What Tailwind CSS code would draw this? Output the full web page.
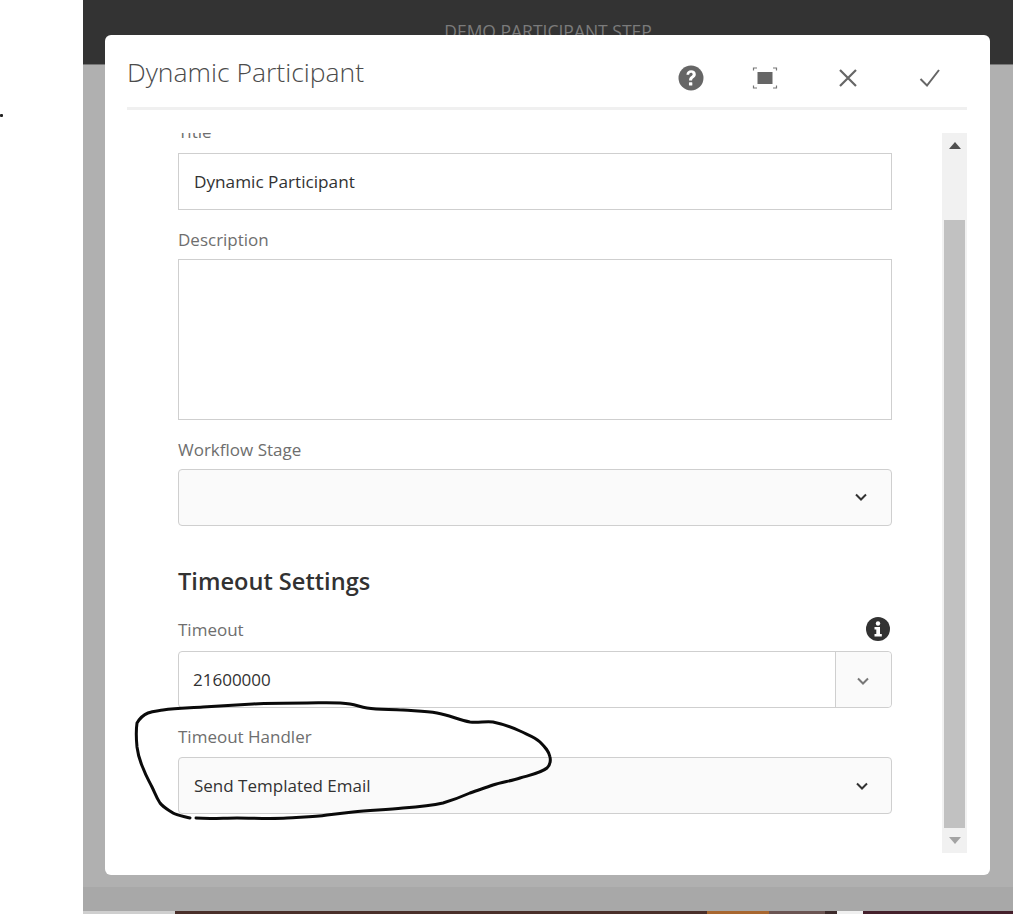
<!DOCTYPE html>
<html lang="en">
<head>
<meta charset="utf-8">
<title>Dynamic Participant</title>
<script src="https://cdn.jsdelivr.net/npm/@tailwindcss/browser@4"></script>
</head>
<body class="bg-white font-['Open_Sans',sans-serif]">
<div class="relative flex h-[914px] w-[1013px] overflow-hidden bg-white">
  <div class="absolute left-0 top-[114px] h-[3px] w-[3px] rounded-[1px] bg-[#222]"></div>
  <div class="w-[83px] shrink-0"></div>
  <div class="flex flex-1 flex-col">
    <div class="flex h-[65px] shrink-0 justify-center border-b border-[#777] bg-[#333] pt-[21px] text-[17.5px] leading-[20px] text-[#7b7b7b]">DEMO PARTICIPANT STEP</div>
    <div class="flex-1 bg-[#b0b0b0]"></div>
    <div class="h-[24px] shrink-0 bg-[#a8a8a8]"></div>
    <div class="flex h-[3px] shrink-0">
      <div class="w-[92px] bg-[#cfcfcf]"></div>
      <div class="w-[532px] bg-[#4a2f2a]"></div>
      <div class="w-[62px] bg-[#a8672f]"></div>
      <div class="w-[56px] bg-[#6b5553]"></div>
      <div class="w-[12px] bg-[#3d2b2b]"></div>
      <div class="w-[26px] bg-[#f0f0f0]"></div>
      <div class="flex-1 bg-[#45202c]"></div>
    </div>
  </div>

  <div class="absolute left-[105px] top-[35px] flex h-[840px] w-[885px] flex-col rounded-[6px] bg-white">
    <div class="ml-[22px] mr-[23px] flex h-[75px] shrink-0 items-center border-b-[3px] border-[#f0f0f0] pt-[14px]">
      <div class="mb-[12px] flex-1 text-[26.5px] font-light leading-[36px] text-[#4b4b4b]">Dynamic Participant</div>
      <div class="flex items-center">
        <svg class="mr-[48px]" width="26" height="26" viewBox="0 0 26 26"><circle cx="13" cy="13" r="12.500" fill="#666"/><g transform="translate(13 13) scale(1.2) translate(-13 -13)"><path d="M9.200 10.200c.1-2.300 1.700-3.600 3.900-3.600 2.300 0 3.900 1.300 3.900 3.300 0 1.500-.8 2.300-1.800 3-1 .7-1.300 1.100-1.300 2.100h-2.500c0-1.700.5-2.500 1.700-3.400.8-.6 1.300-1 1.300-1.700 0-.8-.6-1.300-1.400-1.300-.9 0-1.400.6-1.500 1.600z" fill="#fff"/><rect x="11.300" y="16.500" width="2.800" height="2.800" rx=".5" fill="#fff"/></g></svg>
        <svg class="mr-[60px]" width="26" height="22" viewBox="0 0 26 22" fill="none"><rect x="5.500" y="5" width="15" height="12" fill="#666"/><path d="M5 1H1.500V3.500M21 1H24.500V3.500M5 21H1.500V18.500M21 21H24.500V18.500" stroke="#777" stroke-width="1.200"/></svg>
        <svg class="mr-[61px]" width="20" height="20" viewBox="0 0 20 20" fill="none"><path d="M2 2L18 18M18 2L2 18" stroke="#666" stroke-width="2.200"/></svg>
        <svg class="mr-[26px]" width="22" height="20" viewBox="0 0 22 20" fill="none"><path d="M1.500 11L8 17.500L20 2" stroke="#666" stroke-width="2"/></svg>
      </div>
    </div>

    <div class="mx-[22px] mt-[23px] flex h-[720px] shrink-0">
      <div class="w-[815px] shrink-0 overflow-hidden pl-[51px] pr-[50px]">
        <div class="mb-[9px] mt-[-13px] text-[17px] leading-[24px] text-[#6e6e6e]">Title</div>
        <div class="flex h-[57px] items-center border border-[#cfcfcf] bg-white px-[15px] text-[17.2px] text-[#323232]">Dynamic Participant</div>

        <div class="mb-[7px] mt-[18px] text-[17px] leading-[24px] text-[#6e6e6e]">Description</div>
        <div class="h-[161px] border border-[#cfcfcf] bg-white"></div>

        <div class="mb-[7px] mt-[18px] text-[17px] leading-[24px] text-[#6e6e6e]">Workflow Stage</div>
        <div class="flex h-[57px] items-center justify-end rounded-[4px] border border-[#cfcfcf] bg-[#fafafa] pb-[2px] pr-[23px]">
          <svg width="14" height="10" viewBox="0 0 14 10" fill="none"><path d="M2 2.500L7 7.500L12 2.500" stroke="#323232" stroke-width="2"/></svg>
        </div>

        <div class="mt-[39px] text-[23.6px] font-semibold leading-[32px] text-[#323232]">Timeout Settings</div>

        <div class="mb-[9px] mt-[21px] flex h-[24px] items-center justify-between text-[17px] leading-[24px] text-[#6e6e6e]">
          <span>Timeout</span>
          <svg class="mb-[2px] mr-[2px]" width="24" height="24" viewBox="0 0 24 24"><circle cx="12" cy="12" r="12" fill="#323232"/><circle cx="12" cy="6.500" r="2.200" fill="#fff"/><path d="M8.500 10H14V17H15.800V19.500H8.500V17H10.300V12.500H8.500Z" fill="#fff"/></svg>
        </div>
        <div class="flex h-[57px] rounded-[4px] border border-[#cfcfcf] bg-white">
          <div class="flex flex-1 items-center pl-[14px] text-[17px] text-[#323232]">21600000</div>
          <div class="flex w-[56px] items-center justify-center rounded-r-[4px] border-l border-[#cfcfcf] bg-[#fafafa] pr-[2px] pt-[2px]">
            <svg width="14" height="10" viewBox="0 0 14 10" fill="none"><path d="M2 2.500L7 7.500L12 2.500" stroke="#777" stroke-width="2"/></svg>
          </div>
        </div>

        <div class="mb-[8px] mt-[17px] text-[17px] leading-[24px] text-[#6e6e6e]">Timeout Handler</div>
        <div class="flex h-[57px] items-center justify-between rounded-[4px] border border-[#cfcfcf] bg-[#fafafa] pl-[15px] pr-[22px] text-[17px] text-[#323232]">
          <span>Send Templated Email</span>
          <svg width="14" height="10" viewBox="0 0 14 10" fill="none"><path d="M2 2.500L7 7.500L12 2.500" stroke="#323232" stroke-width="2"/></svg>
        </div>
      </div>

      <div class="flex w-[25px] shrink-0 flex-col items-center bg-[#f1f1f1]">
        <div class="flex h-[87px] w-full shrink-0 justify-center pt-[9px]">
          <svg width="12" height="7" viewBox="0 0 12 7"><path d="M6 0L12 7H0Z" fill="#505050"/></svg>
        </div>
        <div class="h-[608px] w-[21px] shrink-0 bg-[#c1c1c1]"></div>
        <div class="flex w-full flex-1 justify-center pt-[9px]">
          <svg width="12" height="7" viewBox="0 0 12 7"><path d="M0 0H12L6 7Z" fill="#a3a3a3"/></svg>
        </div>
      </div>
    </div>
  </div>

  <svg class="pointer-events-none absolute left-0 top-0" width="1013" height="914" viewBox="0 0 1013 914" fill="none">
    <path d="M190 818C182 816 176 815 173 813C167 809 163 807 160 803C156 797 155 793 152 787C148 779 146 776 143 768C139 759 138 755 137 747C136 737 136 730 137 723C140 718 143 715 148 713C153 711 157 711 163 710C177 708 190 708 203 707C220 706 236 705 253 704C271 703 289 703 307 703C322 703 337 702 350 704C357 705 360 707 367 708C379 710 391 709 403 710C415 711 426 711 437 713C449 715 459 720 470 722C478 723 486 721 493 722C503 724 511 727 520 731C528 735 535 737 540 742C545 747 549 751 550 757C551 762 550 765 547 768C541 773 530 775 520 778C511 781 502 782 493 785C485 788 478 790 470 793C461 797 453 800 443 803C430 806 417 807 403 808C386 810 370 810 353 812C344 813 336 814 327 815C314 817 300 817 287 818C270 819 254 818 237 818C223 818 210 819 196 818" stroke="#0a0a0a" stroke-width="3" stroke-linecap="round" stroke-linejoin="round"/>
  </svg>
</div>
</body>
</html>
